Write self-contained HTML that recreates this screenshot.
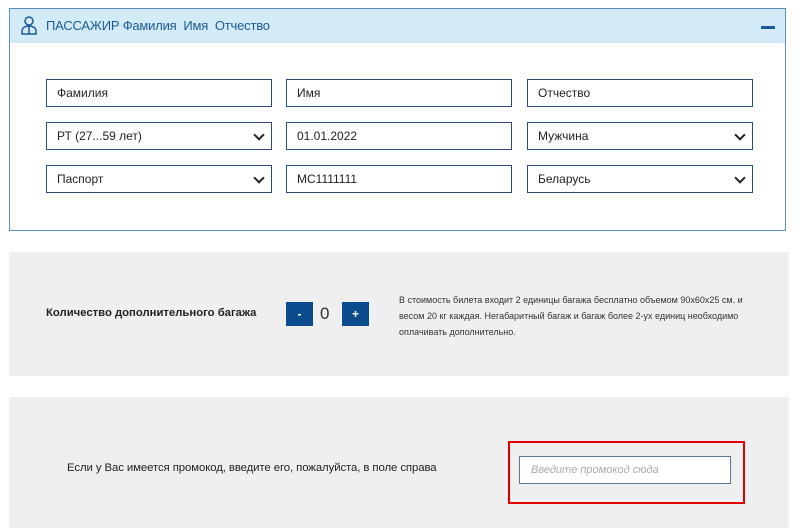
<!DOCTYPE html>
<html><head><meta charset="utf-8"><style>
*{box-sizing:border-box;margin:0;padding:0}
body{width:800px;height:528px;background:#fff;font-family:"Liberation Sans",Arial,sans-serif;position:relative;overflow:hidden}
.a{position:absolute}
.box{left:9px;top:8px;width:777px;height:223px;border:1px solid #5b8fc0;}
.hdr{left:10px;top:9px;width:775px;height:34px;background:#d2ebf7;}
.ht{left:46px;top:18px;font-size:13px;color:#1c5a96;letter-spacing:-0.2px}
.inp{position:absolute;height:28px;width:226px;border:1.5px solid #2c4f7a;background:#fff;font-size:12px;color:#222;padding-left:10px;line-height:27px}
.sel::after{content:"";position:absolute;right:8px;top:8px;width:6px;height:6px;border-right:2px solid #222;border-bottom:2px solid #222;transform:rotate(45deg)}
.g{background:#efefef;left:9px;width:780px}
.btn{position:absolute;background:#0b4a8c;color:#fff;width:27px;height:24px;top:302px;text-align:center;font-size:12px;line-height:24px;font-weight:bold}
</style></head><body>
<div class="a box"></div>
<div class="a hdr"></div>
<svg class="a" style="left:20px;top:15px" width="18" height="20" viewBox="0 0 18 20" fill="none" stroke="#1c5a96" stroke-width="1.5"><circle cx="9" cy="6" r="4"/><path d="M2 19v-3c0-3 3-5 7-5s7 2 7 5v3z"/><path d="M9 11v8"/></svg>
<div class="a ht">ПАССАЖИР Фамилия&nbsp; Имя&nbsp; Отчество</div>
<div class="a" style="left:761px;top:26px;width:14px;height:3px;background:#1c5a96"></div>

<div class="inp" style="left:46px;top:79px">Фамилия</div>
<div class="inp" style="left:286px;top:79px">Имя</div>
<div class="inp" style="left:527px;top:79px">Отчество</div>
<div class="inp sel" style="left:46px;top:122px">РТ (27...59 лет)</div>
<div class="inp" style="left:286px;top:122px">01.01.2022</div>
<div class="inp sel" style="left:527px;top:122px">Мужчина</div>
<div class="inp sel" style="left:46px;top:165px">Паспорт</div>
<div class="inp" style="left:286px;top:165px">МС1111111</div>
<div class="inp sel" style="left:527px;top:165px">Беларусь</div>

<div class="a g" style="top:252px;height:124px"></div>
<div class="a" style="left:46px;top:307px;font-size:11.3px;font-weight:bold;color:#222">Количество дополнительного багажа</div>
<div class="btn" style="left:286px">-</div>
<div class="a" style="left:320px;top:304px;font-size:17px;color:#333">0</div>
<div class="btn" style="left:342px">+</div>
<div class="a" style="left:399px;top:292px;width:370px;font-size:9px;line-height:16px;color:#333">В стоимость билета входит 2 единицы багажа бесплатно объемом 90х60х25 см. и весом 20 кг каждая. Негабаритный багаж и багаж более 2-ух единиц необходимо оплачивать дополнительно.</div>

<div class="a g" style="top:397px;height:131px"></div>
<div class="a" style="left:67px;top:462px;font-size:11.4px;color:#222;letter-spacing:-0.1px">Если у Вас имеется промокод, введите его, пожалуйста, в поле справа</div>
<div class="a" style="left:508px;top:441px;width:237px;height:63px;border:2px solid #e00000"></div>
<div class="a" style="left:519px;top:456px;width:212px;height:28px;background:#fff;border:1.5px solid #5a7896;font-size:11px;font-style:italic;color:#aaa;padding-left:11px;line-height:26px">Введите промокод сюда</div>
</body></html>
